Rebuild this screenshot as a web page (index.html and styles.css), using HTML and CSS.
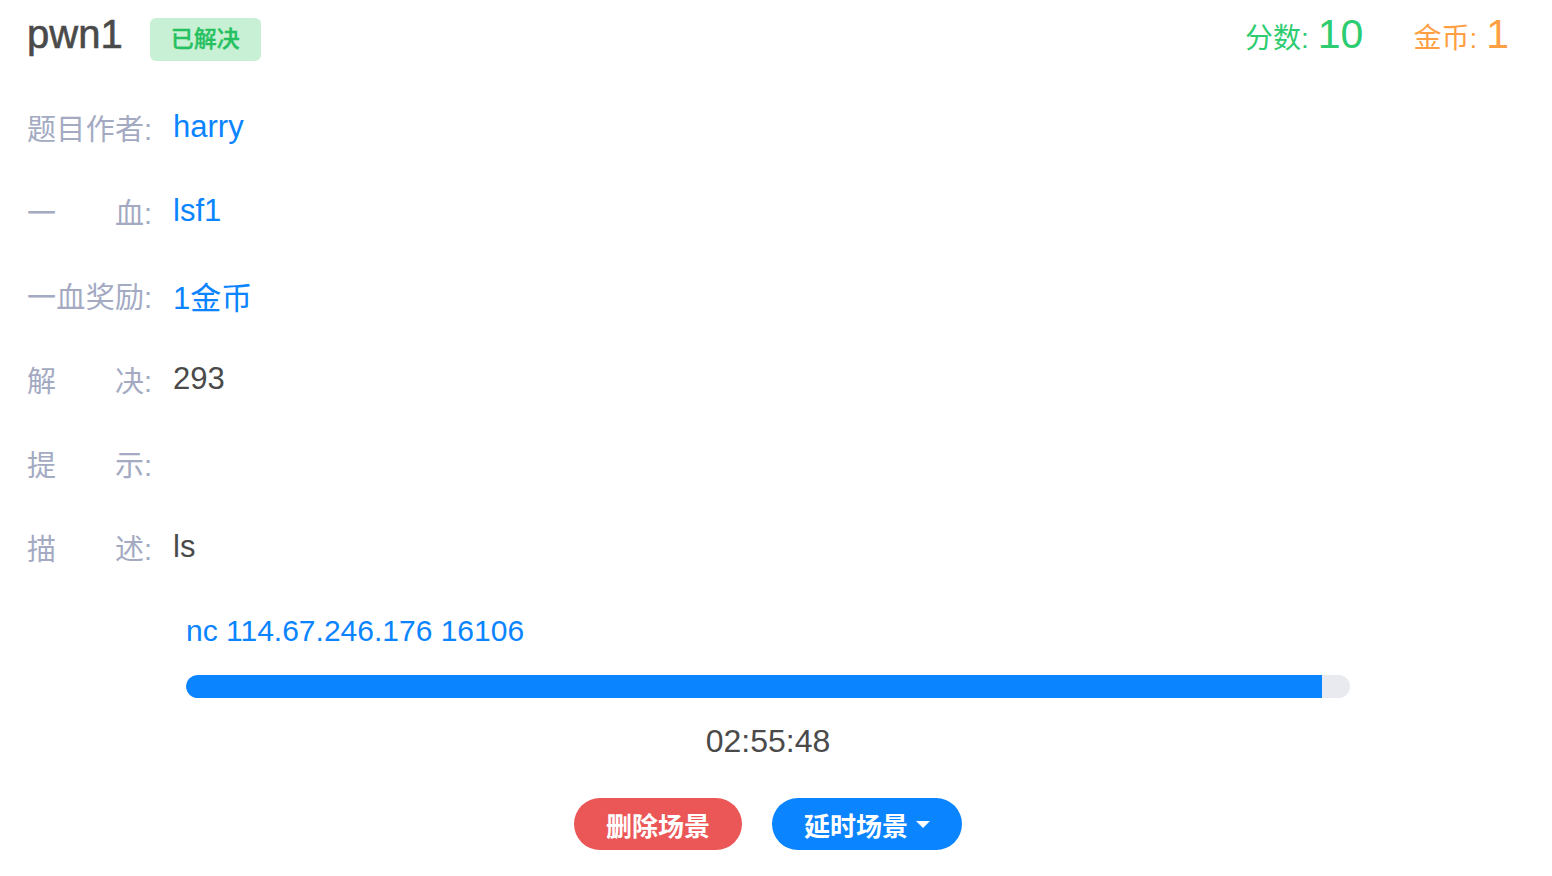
FILE: index.html
```html
<!DOCTYPE html>
<html lang="zh-CN">
<head>
<meta charset="utf-8">
<title>pwn1</title>
<link rel="stylesheet" href="styles.css">
</head>
<body>
<div class="page">
  <header class="header">
    <h1 class="title">pwn1</h1>
    <span class="badge">已解决</span>
    <div class="stats">
      <span class="stat stat-score"><span class="stat-label">分数:</span><span class="stat-num">10</span></span>
      <span class="stat stat-coin"><span class="stat-label">金币:</span><span class="stat-num">1</span></span>
    </div>
  </header>

  <div class="rows">
    <div class="row"><span class="label"><span class="label-text">题目作者</span>:</span><span class="value link">harry</span></div>
    <div class="row"><span class="label"><span class="label-text">一血</span>:</span><span class="value link">lsf1</span></div>
    <div class="row"><span class="label"><span class="label-text">一血奖励</span>:</span><span class="value link">1金币</span></div>
    <div class="row"><span class="label"><span class="label-text">解决</span>:</span><span class="value">293</span></div>
    <div class="row"><span class="label"><span class="label-text">提示</span>:</span><span class="value"></span></div>
    <div class="row"><span class="label"><span class="label-text">描述</span>:</span><span class="value">ls</span></div>
  </div>

  <div class="scene">
    <div class="cmd">nc 114.67.246.176 16106</div>
    <div class="progress"><div class="progress-fill" style="width: 97.6%"></div></div>
    <div class="timer">02:55:48</div>
    <div class="actions">
      <button class="btn btn-danger">删除场景</button>
      <button class="btn btn-primary">延时场景<span class="caret"></span></button>
    </div>
  </div>
</div>
</body>
</html>
```

FILE: styles.css
```css
* { box-sizing: border-box; }
html, body { margin: 0; padding: 0; background: #fff; }
body {
  font-family: "Liberation Sans", "Noto Sans CJK SC", sans-serif;
  color: #4a4a4a;
}
.page {
  width: 1552px;
  padding: 11px 43px 0 27px;
}
.header {
  display: flex;
  align-items: flex-start;
  height: 46px;
}
.title {
  margin: 0;
  font-size: 40px;
  line-height: 46px;
  font-weight: 500;
  color: #4a4a4a;
  -webkit-text-stroke: 0.6px #4a4a4a;
}
.badge {
  margin-left: 27px;
  margin-top: 7px;
  height: 43px;
  line-height: 43px;
  padding: 0 21px;
  border-radius: 6px;
  background: #c8f0d4;
  color: #25c160;
  font-size: 23px;
  font-weight: 500;
  -webkit-text-stroke: 0.3px #25c160;
}
.stats {
  margin-left: auto;
  display: flex;
  align-items: baseline;
  gap: 50px;
  line-height: 46px;
}
.stat { display: flex; align-items: baseline; gap: 9px; }
.stat-label { font-size: 28px; }
.stat-num { font-size: 41px; }
.stat-score { color: #2ecc71; }
.stat-coin { color: #ff9f43; }

.rows { margin-top: 28px; }
.row {
  display: flex;
  align-items: center;
  height: 84px;
}
.label {
  display: flex;
  align-items: baseline;
  width: 126px;
  margin-right: 20px;
  font-size: 29px;
  color: #a3aac2;
  white-space: nowrap;
}
.label-text {
  display: inline-block;
  width: 117px;
  text-align: justify;
  text-align-last: justify;
}
.value { font-size: 31px; color: #4a4a4a; }
.link { color: #0a84ff; }

.scene {
  margin: 0 159px;
  display: flex;
  flex-direction: column;
}
.cmd {
  height: 84px;
  line-height: 84px;
  font-size: 30px;
  color: #0a84ff;
}
.progress {
  margin-top: 2px;
  height: 23px;
  border-radius: 12px;
  background: #e9eaef;
  overflow: hidden;
}
.progress-fill {
  height: 100%;
  background: #0a84ff;
  border-radius: 12px 0 0 12px;
}
.timer {
  margin-top: 23px;
  line-height: 40px;
  font-size: 32px;
  text-align: center;
  color: #4a4a4a;
}
.actions {
  margin-top: 37px;
  display: flex;
  justify-content: center;
  gap: 30px;
}
.btn {
  height: 52px;
  border: none;
  border-radius: 26px;
  padding: 0 32px;
  font-family: inherit;
  font-size: 26px;
  font-weight: 700;
  color: #fff;
  display: flex;
  align-items: center;
  cursor: pointer;
}
.btn-danger { background: #eb5757; }
.btn-primary { background: #0a84ff; }
.caret {
  display: inline-block;
  margin-left: 8px;
  width: 0;
  height: 0;
  border-left: 7px solid transparent;
  border-right: 7px solid transparent;
  border-top: 7px solid #fff;
}
```
